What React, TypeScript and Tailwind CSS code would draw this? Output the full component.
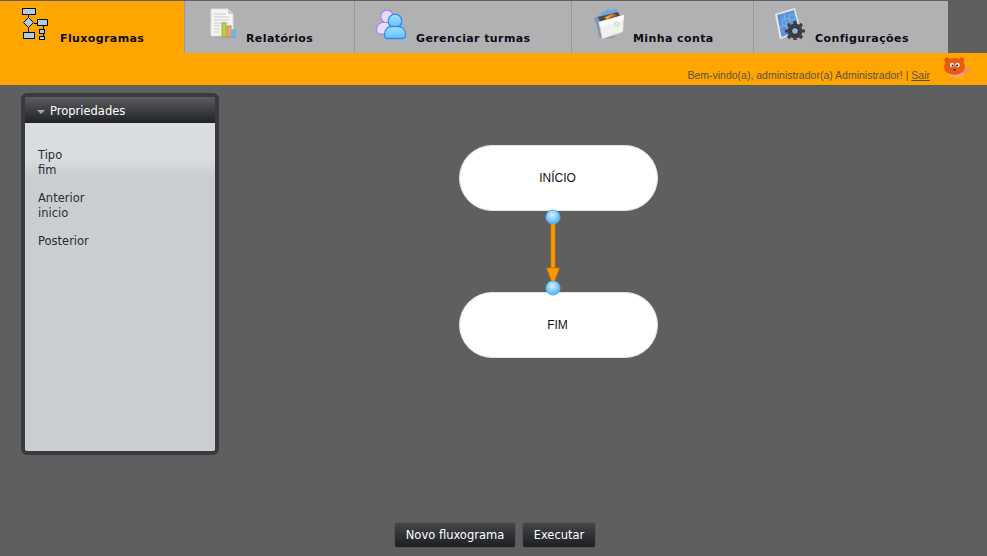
const tabLabel = "font-['DejaVu_Sans',Verdana,sans-serif] text-[11px] leading-[14px] font-bold tracking-[0.4px] text-[#0c0c14] mt-[30px]"
const panelFont = "font-['DejaVu_Sans',Tahoma,sans-serif] text-[11.5px]"

function FlowIcon() {
  return (
    <svg width="32" height="32" viewBox="0 0 32 32" className="shrink-0">
      <g stroke="#0a0a0a" strokeWidth="1" fill="#aecfe2" shapeRendering="crispEdges">
        <path d="M8 7v4M8 20v5M14 15h4M23 18v4M23 26v3" fill="none" />
        <rect x="2.500" y="0.500" width="13" height="6" />
        <rect x="17.500" y="11.500" width="10" height="6" />
        <rect x="3.500" y="24.500" width="11" height="6" />
        <rect x="19.500" y="21.500" width="5" height="4" />
        <rect x="19.500" y="28.500" width="5" height="3" />
      </g>
      <path d="M8.500 9.500l5 5-5 5-5-5z" fill="#aecfe2" stroke="#0a0a0a" />
    </svg>
  )
}

function ReportIcon() {
  return (
    <svg width="32" height="32" viewBox="0 0 32 32" className="shrink-0">
      <ellipse cx="14" cy="28" rx="13" ry="1.500" fill="#8a8a8a" opacity="0.6" />
      <path d="M3 1h17l5 5v22H3z" fill="#f4f4f4" stroke="#dcdcdc" />
      <path d="M20 1l5 5h-5z" fill="#cfcfcf" />
      <path d="M6 6h12M6 9h15M6 12h15M6 15h15M6 18h6M6 21h6M6 24h6" stroke="#cdcdcd" strokeWidth="1" />
      <rect x="14" y="15" width="4" height="14" fill="#b4d64e" stroke="#8fb33a" />
      <rect x="19" y="18" width="4" height="11" fill="#e9a868" stroke="#c88a4c" />
      <rect x="24" y="22" width="3" height="7" fill="#6cc6ee" stroke="#4aaedd" />
    </svg>
  )
}

function UsersIcon() {
  return (
    <svg width="32" height="32" viewBox="0 0 32 32" className="shrink-0">
      <defs>
        <linearGradient id="userBlue" x1="0" y1="0" x2="0" y2="1">
          <stop offset="0" stopColor="#a6e0fd" />
          <stop offset="1" stopColor="#62c0fa" />
        </linearGradient>
      </defs>
      <g fill="#e6dcfa" stroke="#a586e6" strokeWidth="1.200">
        <circle cx="12" cy="8.500" r="6.300" />
        <path d="M1.500 22c0-5 3-7.500 6-7.500h8l3 10-2 1.500H5c-2 0-3.500-2-3.500-4z" />
      </g>
      <g fill="url(#userBlue)" stroke="#2a8cf0" strokeWidth="1.300">
        <circle cx="20" cy="13" r="6.800" />
        <path d="M9.500 27c0-5 3-8.500 6.500-8.500h8c3.500 0 6.500 3.500 6.500 8.500 0 2-1 3.500-3 3.500H12.500c-2 0-3-1.500-3-3.500z" />
      </g>
    </svg>
  )
}

function FolderIcon() {
  return (
    <svg width="32" height="32" viewBox="0 0 32 32" className="shrink-0">
      <ellipse cx="14" cy="29" rx="8" ry="1.500" fill="#808080" opacity="0.5" />
      <path d="M8 5l7-4 3 1 6-1 2 3-3 3-15 4z" fill="#6fa8dc" />
      <path d="M1 10l6-3 2 24-3-2-2-10z" fill="#7f98b4" />
      <path d="M5 9l20-5 2 4-20 6z" fill="#4a4a48" />
      <path d="M12 9l7-3 3 1-9 5z" fill="#f0a028" />
      <path d="M17 8l5-2 1 2-5 2z" fill="#d8582a" />
      <path d="M6 14l25-7-1 17-21 7z" fill="#f0f0ee" stroke="#c4c4c4" strokeWidth="0.500" />
      <path d="M6 14l25-7-.3 5L7 19z" fill="#fafafa" />
      <circle cx="24" cy="16" r="2" fill="none" stroke="#c0dcb8" />
    </svg>
  )
}

function GearIcon() {
  return (
    <svg width="32" height="32" viewBox="0 0 32 32" className="shrink-0">
      <path d="M0 6L20 0l6 24-21 7z" fill="#f0f0f0" stroke="#c9c9c9" strokeWidth="0.600" />
      <path d="M2 7l17-5 5.500 21-18 6z" fill="#5b94d8" />
      <g stroke="#8fbcec" strokeWidth="0.800" fill="none">
        <circle cx="11" cy="14" r="4" />
        <circle cx="17" cy="9" r="3" />
        <path d="M5 19l13-3M9 6l4 18" />
      </g>
      <circle cx="20" cy="23" r="7.500" fill="#3f3f42" />
      <g stroke="#3f3f42" strokeWidth="3.200">
        <path d="M20 13v20M10 23h20M13 16l14 14M27 16L13 30" />
      </g>
      <circle cx="20" cy="23" r="3.500" fill="#8fb3dc" stroke="#1f1f22" />
    </svg>
  )
}

function CrabIcon() {
  return (
    <svg width="26" height="21" viewBox="0 0 26 21" className="shrink-0">
      <circle cx="3" cy="3" r="2.500" fill="#d9560f" />
      <circle cx="17.500" cy="3" r="2.500" fill="#d9560f" />
      <ellipse cx="21" cy="13" rx="4.500" ry="3.500" fill="#f2905a" />
      <ellipse cx="12" cy="17.500" rx="8" ry="3" fill="#f6a67a" />
      <ellipse cx="10.500" cy="9.500" rx="10.500" ry="8.500" fill="#ea5a10" />
      <circle cx="8" cy="8" r="2.200" fill="#fff" />
      <circle cx="13.500" cy="8" r="2.200" fill="#fff" />
      <circle cx="8.500" cy="8.500" r="1" fill="#111" />
      <circle cx="13" cy="8.500" r="1" fill="#111" />
      <circle cx="10.500" cy="13" r="1" fill="#4a1a08" />
    </svg>
  )
}

const tabs = [
  { label: 'Fluxogramas', icon: <FlowIcon />, cls: 'w-[184px] pl-5 bg-[#ffa500]', gap: 'ml-2' },
  { label: 'Relatórios', icon: <ReportIcon />, cls: 'w-[170px] pl-[23px] border-l border-[#9a9a9c]', gap: 'ml-[6px]' },
  { label: 'Gerenciar turmas', icon: <UsersIcon />, cls: 'w-[217px] pl-5 border-l border-[#9a9a9c]', gap: 'ml-[9px]' },
  { label: 'Minha conta', icon: <FolderIcon />, cls: 'w-[182px] pl-[21px] border-l border-[#9a9a9c]', gap: 'ml-2' },
  { label: 'Configurações', icon: <GearIcon />, cls: 'w-[195px] pl-[21px] border-l border-[#9a9a9c]', gap: 'ml-2' },
]

function FlowNode({ label, className }: { label: string; className: string }) {
  return (
    <div className={`absolute left-[459px] w-[199px] h-[66px] pr-[2px] rounded-full bg-white border border-[#e4e4e4] flex items-center justify-center font-['Liberation_Sans',Arial,sans-serif] text-xs text-[#111] ${className}`}>
      {label}
    </div>
  )
}

function Ball({ cy }: { cy: number }) {
  return <circle cx="8" cy={cy} r="7" fill="url(#ball)" stroke="#4fb2f5" strokeWidth="1" />
}

export default function App() {
  return (
    <div className="w-[987px] h-[556px] overflow-hidden bg-[#5f5f5f] flex flex-col">
      <header className="pt-px">
        <nav className="flex h-[52px] w-[948px] bg-[#b1b1b3]">
          {tabs.map((t) => (
            <div key={t.label} className={`flex items-start shrink-0 pt-[7px] ${t.cls}`}>
              {t.icon}
              <span className={`${tabLabel} ${t.gap} -translate-y-[6px]`}>{t.label}</span>
            </div>
          ))}
        </nav>
        <div className="h-8 bg-[#ffa500] flex items-start justify-end pr-[17px] pt-[4px]">
          <span className="mt-[12px] mr-[14px] font-['Liberation_Sans',Arial,sans-serif] text-[10.5px] leading-[13px] text-[#5a5040]">
            Bem-vindo(a), administrador(a) Administrador! | <a className="underline">Sair</a>
          </span>
          <CrabIcon />
        </div>
      </header>

      <main className="relative flex-1 flex flex-col">
        <aside className="mt-2 ml-[21px] w-[198px] h-[362px] rounded-md border-4 border-[#3a3b40] flex flex-col overflow-hidden">
          <div className={`h-[26px] shrink-0 flex items-center pt-[3px] pl-3 gap-[5px] bg-gradient-to-b from-[#5c5d60] to-[#222327] text-white ${panelFont}`}>
            <span className="w-0 h-0 border-x-4 border-t-[4px] border-x-transparent border-t-[#a8a8a8]" />
            Propriedades
          </div>
          <div className={`flex-1 pt-[25px] px-[13px] bg-gradient-to-b from-[#dadde0] from-[11%] to-[#cbced1] to-[16%] text-[#2a2a38] leading-[14.500px] ${panelFont}`}>
            <p>Tipo<br />fim</p>
            <p className="mt-[14px]">Anterior<br />inicio</p>
            <p className="mt-[14px]">Posterior</p>
          </div>
        </aside>

        <FlowNode label="INÍCIO" className="top-[60px]" />
        <FlowNode label="FIM" className="top-[207px]" />
        <svg width="16" height="88" viewBox="0 0 16 88" className="absolute left-[545px] top-[124px]">
          <defs>
            <radialGradient id="ball" cx="45%" cy="35%" r="70%">
              <stop offset="0" stopColor="#d8f0ff" />
              <stop offset="0.6" stopColor="#7cc8fb" />
              <stop offset="1" stopColor="#45aaf2" />
            </radialGradient>
          </defs>
          <rect x="6" y="8" width="4" height="56" fill="#ff9900" stroke="#d97f00" strokeWidth="0.600" />
          <path d="M1.500 59h13L8 76z" fill="#ff9900" stroke="#c97400" strokeWidth="1" />
          <Ball cy={8} />
          <Ball cy={79} />
        </svg>

        <div className={`mt-[67px] flex justify-center gap-[6px] pl-[3px] ${panelFont}`}>
          <button className="w-[122px] h-[26px] pt-px rounded-[3px] border border-[#55565a] bg-gradient-to-b from-[#45464a] to-[#1e1f23] text-white">Novo fluxograma</button>
          <button className="w-[74px] h-[26px] pt-px rounded-[3px] border border-[#55565a] bg-gradient-to-b from-[#45464a] to-[#1e1f23] text-white">Executar</button>
        </div>
      </main>
    </div>
  )
}
